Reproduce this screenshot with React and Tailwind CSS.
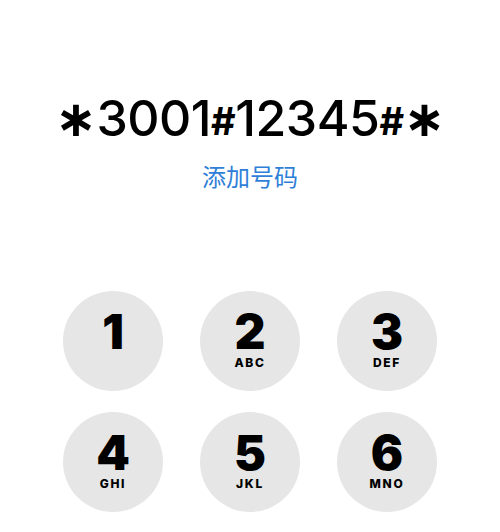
import React from 'react';

const keys = [
  { digit: '1', letters: '' },
  { digit: '2', letters: 'ABC' },
  { digit: '3', letters: 'DEF' },
  { digit: '4', letters: 'GHI' },
  { digit: '5', letters: 'JKL' },
  { digit: '6', letters: 'MNO' },
];

const Key = ({ digit, letters }) => (
  <div className="w-[100px] h-[100px] rounded-full bg-[#e6e6e6] flex flex-col items-center pt-[17px]">
    <span className="text-[48px] leading-[48px] font-black text-black font-['Inter',sans-serif]">
      {digit}
    </span>
    {letters && (
      <span className="mt-[1px] text-[12px] leading-[12px] font-extrabold tracking-[0.14em] text-black font-['Inter',sans-serif]">
        {letters}
      </span>
    )}
  </div>
);

const Star = () => (
  <span className="text-[50px] leading-none font-['DejaVu_Sans',sans-serif] font-bold">∗</span>
);

const Hash = () => (
  <span className="text-[38px] leading-none font-bold align-[1px]">#</span>
);

const App = () => {
  return (
    <div className="w-[500px] h-[532px] bg-white overflow-hidden flex flex-col items-center">
      <div className="mt-[88px] h-[60px] text-[50px] leading-[60px] text-black font-['Inter',sans-serif] font-medium tracking-[-0.01em] whitespace-nowrap">
        <Star />3001<Hash />12345<Hash /><Star />
      </div>
      <div className="mt-[13px] text-[24px] leading-[30px] text-[#2f7fd8] font-['Noto_Sans_CJK_SC',sans-serif]">
        添加号码
      </div>
      <div className="mt-[100px] grid grid-cols-3 gap-x-[37px] gap-y-[21px]">
        {keys.map((k) => (
          <Key key={k.digit} digit={k.digit} letters={k.letters} />
        ))}
      </div>
    </div>
  );
};

export default App;
